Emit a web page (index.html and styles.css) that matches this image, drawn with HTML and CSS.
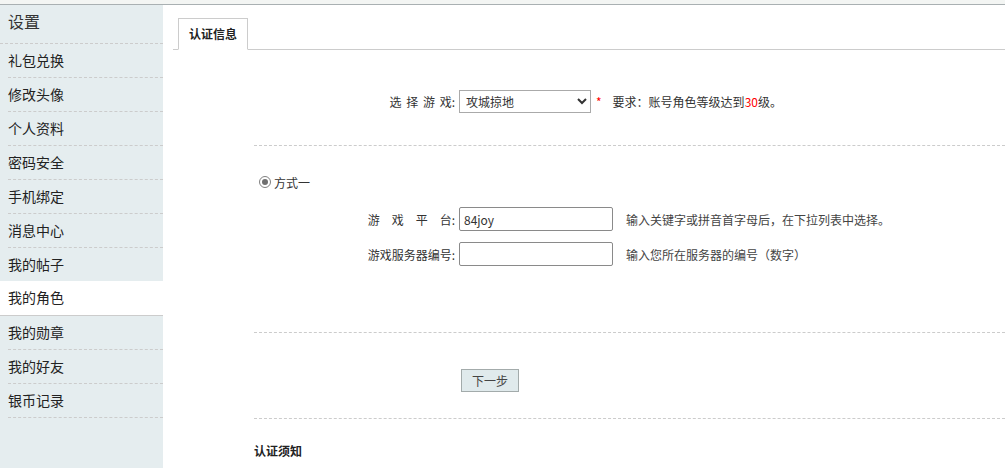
FILE: index.html
```html
<!DOCTYPE html>
<html lang="zh-CN">

<head>
    <meta charset="UTF-8">
    <meta name="viewport" content="width=device-width, initial-scale=1.0">
    <title>认证信息</title>
    <link rel="stylesheet" href="styles.css">
</head>

<body>
    <div class="topbar"></div>

    <div class="layout">
        <aside class="sidebar">
            <h2 class="side-title">设置</h2>
            <ul class="side-menu">
                <li><a href="#">礼包兑换</a></li>
                <li><a href="#">修改头像</a></li>
                <li><a href="#">个人资料</a></li>
                <li><a href="#">密码安全</a></li>
                <li><a href="#">手机绑定</a></li>
                <li><a href="#">消息中心</a></li>
                <li><a href="#">我的帖子</a></li>
                <li class="active"><a href="#">我的角色</a></li>
                <li><a href="#">我的勋章</a></li>
                <li><a href="#">我的好友</a></li>
                <li><a href="#">银币记录</a></li>
            </ul>
        </aside>

        <main class="content">
            <div class="tabs">
                <span class="tab active">认证信息</span>
            </div>

            <form class="panel" id="authForm">
                <div class="section game-row">
                    <label class="row-label spaced" for="game">选 择 游 戏:</label>
                    <select id="game" name="game">
                        <option>攻城掠地</option>
                    </select>
                    <span class="required">*</span>
                    <span class="require-text">要求：账号角色等级达到<em>30</em>级。</span>
                </div>

                <div class="section method">
                    <label class="radio-line">
                        <input type="radio" name="method" checked>
                        <span>方式一</span>
                    </label>

                    <div class="form-row">
                        <label class="row-label" for="platform">游　戏　平　台:</label>
                        <input type="text" id="platform" name="platform" value="84joy">
                        <span class="hint">输入关键字或拼音首字母后，在下拉列表中选择。</span>
                    </div>

                    <div class="form-row">
                        <label class="row-label" for="server">游戏服务器编号:</label>
                        <input type="text" id="server" name="server">
                        <span class="hint">输入您所在服务器的编号（数字）</span>
                    </div>
                </div>

                <div class="section actions">
                    <button type="submit">下一步</button>
                </div>

                <div class="notice">
                    <h3>认证须知</h3>
                </div>
            </form>
        </main>
    </div>
</body>

</html>
```

FILE: styles.css
```css
html,
body {
    height: 100%;
}

body {
    margin: 0;
    font-family: "Noto Sans CJK SC", "Liberation Sans", sans-serif;
    font-size: 12px;
    color: #333;
    display: flex;
    flex-direction: column;
}

.topbar {
    height: 4px;
    background: #f3f5f3;
    border-bottom: 1px solid #a9b0b2;
}

.layout {
    flex: 1;
    display: flex;
}

/* 左侧菜单 */
.sidebar {
    width: 163px;
    background: #e5edef;
}

.side-title {
    margin: 0;
    padding-left: 8px;
    height: 38px;
    line-height: 33px;
    font-size: 16px;
    font-weight: normal;
    color: #333;
    border-bottom: 1px dashed #ccc;
}

.side-menu {
    list-style: none;
    margin: 0;
    padding: 0;
}

.side-menu li {
    margin-left: 8px;
    height: 33px;
    border-bottom: 1px dashed #ccc;
}

.side-menu a {
    display: block;
    line-height: 32px;
    font-size: 14px;
    color: #222;
    text-decoration: none;
}

.side-menu li.active {
    margin-left: 0;
    margin-top: -1px;
    padding-left: 8px;
    height: 34px;
    background: #fff;
    border-bottom: 1px solid #ccc;
}

.side-menu li.active a {
    line-height: 33px;
}

/* 右侧内容 */
.content {
    flex: 1;
    background: #fff;
}

.tabs {
    margin: 13px 0 0 10px;
    padding-left: 5px;
    height: 31px;
    border-bottom: 1px solid #ccc;
}

.tab {
    display: inline-block;
    padding: 0 10px;
    line-height: 30px;
    font-weight: bold;
    color: #222;
    border: 1px solid #ccc;
    border-bottom-color: #fff;
    background: #fff;
}

.panel {
    margin-left: 91px;
}

.section {
    border-bottom: 1px dashed #ccc;
}

.row-label {
    width: 201px;
    text-align: right;
    color: #333;
}

.row-label.spaced {
    word-spacing: 2px;
}

.game-row {
    display: flex;
    align-items: center;
    gap: 4px;
    padding: 40px 0 32px;
}

select {
    width: 132px;
    height: 23px;
    font-family: inherit;
    font-size: 12px;
    color: #333;
    border: 1px solid #aaa;
    border-radius: 0;
    background: #fff;
    padding: 0 2px;
}

.required {
    margin-left: 1px;
    color: #f00;
}

.require-text {
    margin-left: 7px;
}

.require-text em {
    font-style: normal;
    color: #f00;
}

.method {
    padding: 26px 0 66px;
}

.radio-line {
    display: flex;
    align-items: center;
    gap: 3px;
    height: 20px;
    margin-left: 5px;
    margin-bottom: 15px;
}

.radio-line input {
    appearance: none;
    margin: 0;
    width: 12px;
    height: 12px;
    border: 1px solid #808080;
    border-radius: 50%;
    background: #fff;
    box-sizing: border-box;
    position: relative;
}

.radio-line input:checked::after {
    content: "";
    position: absolute;
    left: 2px;
    top: 2px;
    width: 6px;
    height: 6px;
    border-radius: 50%;
    background: #6f6f6f;
}

.form-row {
    display: flex;
    align-items: center;
    gap: 4px;
    margin-bottom: 11px;
}

.form-row:last-child {
    margin-bottom: 0;
}

.form-row input {
    width: 154px;
    height: 24px;
    padding: 0 4px;
    box-sizing: border-box;
    font-family: inherit;
    font-size: 12px;
    color: #333;
    border: 1px solid #8a8a8a;
    border-radius: 2px;
}

.hint {
    margin-left: 9px;
    color: #444;
}

.actions {
    padding: 36px 0 26px 207px;
}

button {
    display: block;
    width: 58px;
    height: 23px;
    padding: 0;
    font-family: inherit;
    font-size: 12px;
    color: #444;
    background: #e0eaec;
    border: 1px solid #a3abab;
    cursor: pointer;
}

.notice h3 {
    margin: 0;
    padding-top: 24px;
    font-size: 12px;
    line-height: 16px;
    color: #222;
}
```
